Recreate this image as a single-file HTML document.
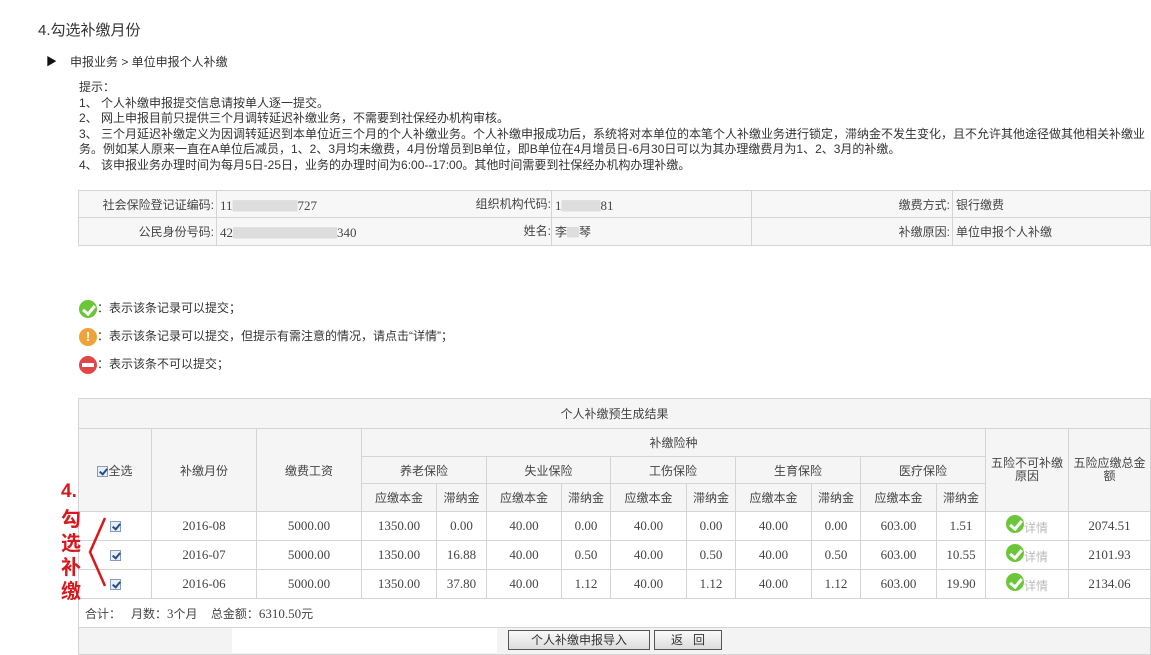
<!DOCTYPE html>
<html><head><meta charset="utf-8">
<style>
*{margin:0;padding:0;box-sizing:border-box}
body{width:1151px;height:655px;overflow:hidden;background:#fff;font-family:"Liberation Sans","Noto Sans CJK SC",sans-serif;color:#333;position:relative;font-size:12px}
.a{position:absolute;white-space:nowrap}
table{border-collapse:collapse;table-layout:fixed;position:absolute}
td{border:1px solid #d4d4d4;text-align:center;font-size:12px;color:#444;overflow:hidden;white-space:nowrap}
.h td{background:#f5f5f5}
.info td{background:#f7f7f7}
.num{font-family:"Liberation Serif","Noto Serif CJK SC",serif;font-size:13px}
.cb{display:inline-block;width:11px;height:11px;border:1px solid #8a9bb5;background:#e8eef8;vertical-align:middle;position:relative}
.cb:after{content:"";position:absolute;left:3px;top:0px;width:3px;height:6px;border:solid #2b4a8a;border-width:0 2px 2px 0;transform:rotate(40deg)}
.ok{display:inline-block;width:18px;height:18px;border-radius:50%;background:#6cc63a;position:relative;vertical-align:middle}
.ok:after{content:"";position:absolute;left:6px;top:3px;width:5px;height:9px;border:solid #fff;border-width:0 3px 3px 0;transform:rotate(40deg)}
.btn{position:absolute;border:1px solid #555;background:linear-gradient(#fafafa,#dcdcdc);font-size:12px;text-align:center;line-height:18px;height:20px}
.red{color:#d7181e;font-weight:bold;font-size:20px;font-family:"Liberation Sans","Noto Sans CJK SC",sans-serif;position:absolute;left:61px}
.r{text-align:right;padding-right:2px}
.l{text-align:left;padding-left:3px}
</style></head><body>
<div class="a" style="left:38px;top:19px;font-size:15px;color:#333">4.勾选补缴月份</div>
<div class="a" style="left:46px;top:53px;font-size:11px;color:#111">▶</div>
<div class="a" style="left:70px;top:53px;font-size:12px;color:#333">申报业务 &gt; 单位申报个人补缴</div>
<div class="a" style="left:79px;top:80px;font-size:12px;line-height:15.5px;color:#333">提示：<br>1、 个人补缴申报提交信息请按单人逐一提交。<br>2、 网上申报目前只提供三个月调转延迟补缴业务，不需要到社保经办机构审核。<br>3、 三个月延迟补缴定义为因调转延迟到本单位近三个月的个人补缴业务。个人补缴申报成功后，系统将对本单位的本笔个人补缴业务进行锁定，滞纳金不发生变化，且不允许其他途径做其他相关补缴业<br>务。例如某人原来一直在A单位后减员，1、2、3月均未缴费，4月份增员到B单位，即B单位在4月增员日-6月30日可以为其办理缴费月为1、2、3月的补缴。<br>4、 该申报业务办理时间为每月5日-25日，业务的办理时间为6:00--17:00。其他时间需要到社保经办机构办理补缴。</div>

<table class="info" style="left:78px;top:190px;width:1073px">
<colgroup><col style="width:138px"><col style="width:335px"><col style="width:200px"><col style="width:201px"><col></colgroup>
<tr style="height:27px"><td class="r">社会保险登记证编码:</td><td class="l"><span class="num">11<span style="color:#ddd">▇▇▇▇▇</span>727</span><span style="float:right;padding-right:0">组织机构代码:</span></td><td class="l"><span class="num">1<span style="color:#ddd">▇▇▇</span>81</span></td><td class="r">缴费方式:</td><td class="l">银行缴费</td></tr>
<tr style="height:28px"><td class="r">公民身份号码:</td><td class="l"><span class="num">42<span style="color:#ddd">▇▇▇▇▇▇▇▇</span>340</span><span style="float:right">姓名:</span></td><td class="l">李<span style="color:#ddd">▇</span>琴</td><td class="r">补缴原因:</td><td class="l">单位申报个人补缴</td></tr>
</table>

<div class="a" style="left:79px;top:299px"><span class="ok"></span>：表示该条记录可以提交；</div>
<div class="a" style="left:79px;top:327px"><span style="display:inline-block;width:18px;height:18px;border-radius:50%;background:#f0a23a;color:#fff;font-weight:bold;text-align:center;line-height:18px;font-size:13px;vertical-align:middle">!</span>：表示该条记录可以提交，但提示有需注意的情况，请点击“详情”；</div>
<div class="a" style="left:79px;top:355px"><span style="display:inline-block;width:18px;height:18px;border-radius:50%;background:#e04848;vertical-align:middle;position:relative"><span style="position:absolute;left:3px;top:7px;width:12px;height:4px;background:#fff"></span></span>：表示该条不可以提交；</div>

<table style="left:78px;top:398px;width:1073px">
<colgroup><col style="width:73px"><col style="width:105px"><col style="width:105px"><col style="width:75px"><col style="width:50px"><col style="width:75px"><col style="width:49px"><col style="width:76px"><col style="width:49px"><col style="width:76px"><col style="width:49px"><col style="width:76px"><col style="width:49px"><col style="width:83px"><col></colgroup>
<tr class="h" style="height:30px"><td colspan="15">个人补缴预生成结果</td></tr>
<tr class="h" style="height:28px"><td rowspan="3"><span class="cb"></span>全选</td><td rowspan="3">补缴月份</td><td rowspan="3">缴费工资</td><td colspan="10">补缴险种</td><td rowspan="3" style="line-height:13px;white-space:normal">五险不可补缴<br>原因</td><td rowspan="3" style="line-height:13px;white-space:normal">五险应缴总金<br>额</td></tr>
<tr class="h" style="height:27px"><td colspan="2">养老保险</td><td colspan="2">失业保险</td><td colspan="2">工伤保险</td><td colspan="2">生育保险</td><td colspan="2">医疗保险</td></tr>
<tr class="h" style="height:28px"><td>应缴本金</td><td>滞纳金</td><td>应缴本金</td><td>滞纳金</td><td>应缴本金</td><td>滞纳金</td><td>应缴本金</td><td>滞纳金</td><td>应缴本金</td><td>滞纳金</td></tr>
<tr style="height:29px"><td><span class="cb"></span></td><td class="num">2016-08</td><td class="num">5000.00</td><td class="num">1350.00</td><td class="num">0.00</td><td class="num">40.00</td><td class="num">0.00</td><td class="num">40.00</td><td class="num">0.00</td><td class="num">40.00</td><td class="num">0.00</td><td class="num">603.00</td><td class="num">1.51</td><td><span class="ok"></span><span style="color:#bbb;font-size:12px;vertical-align:-5px">详情</span></td><td class="num">2074.51</td></tr>
<tr style="height:29px"><td><span class="cb"></span></td><td class="num">2016-07</td><td class="num">5000.00</td><td class="num">1350.00</td><td class="num">16.88</td><td class="num">40.00</td><td class="num">0.50</td><td class="num">40.00</td><td class="num">0.50</td><td class="num">40.00</td><td class="num">0.50</td><td class="num">603.00</td><td class="num">10.55</td><td><span class="ok"></span><span style="color:#bbb;font-size:12px;vertical-align:-5px">详情</span></td><td class="num">2101.93</td></tr>
<tr style="height:29px"><td><span class="cb"></span></td><td class="num">2016-06</td><td class="num">5000.00</td><td class="num">1350.00</td><td class="num">37.80</td><td class="num">40.00</td><td class="num">1.12</td><td class="num">40.00</td><td class="num">1.12</td><td class="num">40.00</td><td class="num">1.12</td><td class="num">603.00</td><td class="num">19.90</td><td><span class="ok"></span><span style="color:#bbb;font-size:12px;vertical-align:-5px">详情</span></td><td class="num">2134.06</td></tr>
<tr style="height:29px"><td colspan="15" style="text-align:left;padding-left:6px">合计：&nbsp;&nbsp;&nbsp;月数：<span class="num">3</span>个月&nbsp;&nbsp;&nbsp;&nbsp;总金额：<span class="num">6310.50</span>元</td></tr>
<tr style="height:27px"><td colspan="15" style="background:#f3f3f3"></td></tr>
</table>
<div class="a" style="left:232px;top:628px;width:265px;height:25px;background:#fff"></div>
<div class="btn" style="left:508px;top:630px;width:142px">个人补缴申报导入</div>
<div class="btn" style="left:654px;top:630px;width:68px">返&nbsp;&nbsp;&nbsp;回</div>

<div class="red" style="top:481px;font-size:19px">4.</div>
<div class="red" style="top:503px">勾</div>
<div class="red" style="top:527px">选</div>
<div class="red" style="top:551px">补</div>
<div class="red" style="top:575px">缴</div>
<svg class="a" style="left:85px;top:515px" width="25" height="75"><path d="M20 3 L5 37 L20 71" fill="none" stroke="#d7181e" stroke-width="2.5"/></svg>
</body></html>
